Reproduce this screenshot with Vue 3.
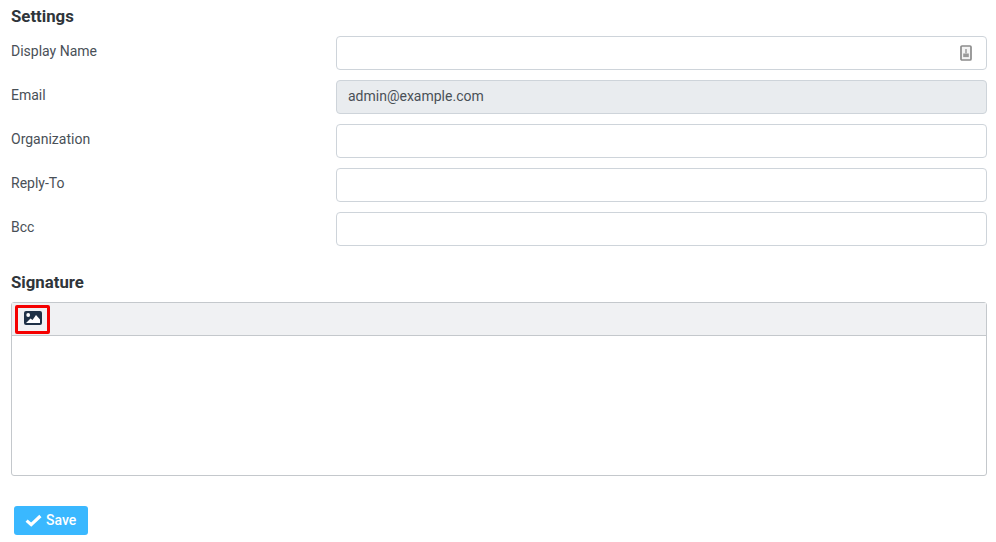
<script setup>
const fields = [
  { label: 'Display Name', value: '', icon: true },
  { label: 'Email', value: 'admin@example.com', disabled: true },
  { label: 'Organization', value: '' },
  { label: 'Reply-To', value: '' },
  { label: 'Bcc', value: '' }
]
</script>

<template>
  <div class="page">
    <h2 class="title">Settings</h2>
    <div class="rows">
      <div v-for="f in fields" :key="f.label" class="row">
        <div class="label">{{ f.label }}</div>
        <div class="control" :class="{ disabled: f.disabled }">
          <span class="value">{{ f.value }}</span>
          <svg v-if="f.icon" class="ficon" width="12" height="16" viewBox="0 0 12 16">
            <rect x="1" y="1" width="10" height="14" rx="1" fill="#f4f4f4" stroke="#8c8c8c" stroke-width="1.7" />
            <rect x="3.2" y="8.5" width="5.6" height="3.6" fill="#9a9a9a" />
            <rect x="5" y="4" width="2" height="4.5" fill="#b4b4b4" />
          </svg>
        </div>
      </div>
    </div>
    <h2 class="title sig">Signature</h2>
    <div class="editor">
      <div class="toolbar">
        <div class="tool">
          <svg width="18" height="14" viewBox="0 0 18 14">
            <rect x="0" y="0" width="18" height="14" rx="2" fill="#1f3146" />
            <circle cx="4.2" cy="4" r="1.9" fill="#fff" />
            <path d="M2 12 L6.5 7.5 L8.5 9 L12 4 L16 8.5 V12 Z" fill="#fff" />
          </svg>
        </div>
      </div>
      <div class="body"></div>
    </div>
    <button class="save">
      <svg width="17" height="13" viewBox="0 0 17 13">
        <path d="M1.6 6.6 L6.2 10.6 L15.4 2" fill="none" stroke="#fff" stroke-width="3.2" />
      </svg>
      <span class="save-text">Save</span>
    </button>
  </div>
</template>

<style scoped>
.page {
  width: 996px;
  height: 542px;
  box-sizing: border-box;
  padding: 7px 9px 0 11px;
  font-family: Roboto, "Liberation Sans", sans-serif;
  font-size: 14px;
  color: #343a40;
  background: #fff;
  overflow: hidden;
}
.title {
  margin: 0;
  font-size: 16.8px;
  font-weight: 700;
  line-height: 18px;
  color: #2f353a;
}
.rows {
  display: flex;
  flex-direction: column;
  gap: 10px;
  margin-top: 11px;
}
.row {
  display: flex;
  height: 34px;
}
.label {
  width: 325px;
  line-height: 30px;
  color: #495057;
}
.control {
  flex: 1;
  display: flex;
  align-items: center;
  justify-content: space-between;
  box-sizing: border-box;
  height: 34px;
  padding: 0 14px 2px 11px;
  border: 1px solid #ced4da;
  border-radius: 4px;
  background: #fff;
  color: #495057;
}
.control.disabled {
  background: #e9ecef;
}
.ficon {
  margin-top: 1px;
}
.sig {
  margin-top: 27px;
}
.editor {
  margin-top: 11px;
  height: 174px;
  box-sizing: border-box;
  border: 1px solid #c4c8cc;
  border-radius: 3px;
  display: flex;
  flex-direction: column;
}
.toolbar {
  height: 33px;
  flex: none;
  box-sizing: border-box;
  background: #f0f1f3;
  border-bottom: 1px solid #c4c8cc;
  padding: 2px 3px;
}
.tool {
  width: 35px;
  height: 29px;
  box-sizing: border-box;
  border: 3px solid #f50000;
  border-radius: 2px;
  padding: 0 0 4px 1px;
  display: flex;
  align-items: center;
  justify-content: center;
}
.body {
  flex: 1;
}
.save {
  display: flex;
  align-items: center;
  gap: 4px;
  margin: 30px 0 0 3px;
  width: 74px;
  height: 29px;
  padding: 0 0 1px 11px;
  border: none;
  border-radius: 3px;
  background: #3ab8ff;
  color: #fff;
  font-family: Roboto, "Liberation Sans", sans-serif;
  font-size: 14px;
  font-weight: 500;
}
</style>
